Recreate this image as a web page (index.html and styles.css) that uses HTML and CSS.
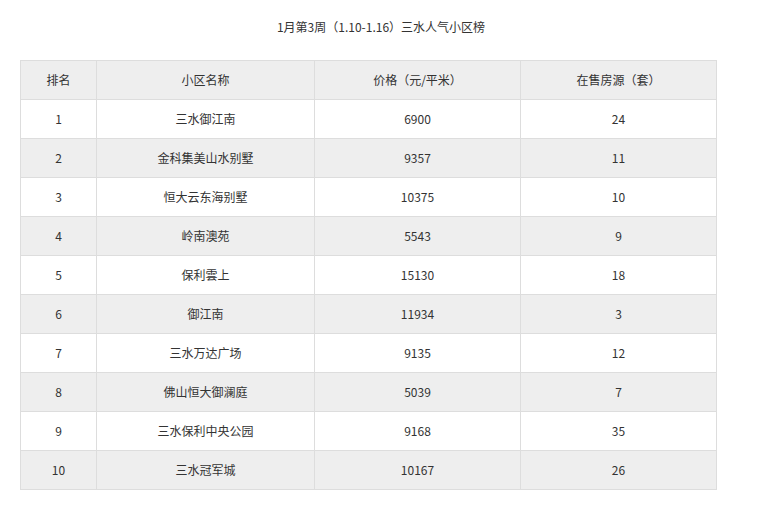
FILE: index.html
```html
<!DOCTYPE html>
<html lang="zh">
<head>
<meta charset="utf-8">
<link rel="stylesheet" href="styles.css">
</head>
<body>
<div class="page">
  <div class="title">1月第3周（1.10-1.16）三水人气小区榜</div>
  <table class="rank">
    <colgroup>
      <col class="c1"><col class="c2"><col class="c3"><col class="c4">
    </colgroup>
    <thead>
      <tr><th>排名</th><th>小区名称</th><th>价格（元/平米）</th><th>在售房源（套）</th></tr>
    </thead>
    <tbody>
      <tr><td>1</td><td>三水御江南</td><td>6900</td><td>24</td></tr>
      <tr><td>2</td><td>金科集美山水别墅</td><td>9357</td><td>11</td></tr>
      <tr><td>3</td><td>恒大云东海别墅</td><td>10375</td><td>10</td></tr>
      <tr><td>4</td><td>岭南澳苑</td><td>5543</td><td>9</td></tr>
      <tr><td>5</td><td>保利雲上</td><td>15130</td><td>18</td></tr>
      <tr><td>6</td><td>御江南</td><td>11934</td><td>3</td></tr>
      <tr><td>7</td><td>三水万达广场</td><td>9135</td><td>12</td></tr>
      <tr><td>8</td><td>佛山恒大御澜庭</td><td>5039</td><td>7</td></tr>
      <tr><td>9</td><td>三水保利中央公园</td><td>9168</td><td>35</td></tr>
      <tr><td>10</td><td>三水冠军城</td><td>10167</td><td>26</td></tr>
    </tbody>
  </table>
</div>
</body>
</html>
```
FILE: styles.css
```css
html, body {
  margin: 0;
  padding: 0;
  background: #fff;
}
body {
  font-family: "Noto Sans CJK SC", "Noto Sans", sans-serif;
  font-size: 12px;
  color: #333;
}
.page {
  padding-top: 18px;
}
.title {
  text-align: center;
  line-height: 18px;
  height: 18px;
  margin-bottom: 24px;
}
.rank {
  margin-left: 20px;
  border-collapse: collapse;
  table-layout: fixed;
  width: 696px;
}
.c1 { width: 76px; }
.c2 { width: 218px; }
.c3 { width: 206px; }
.c4 { width: 196px; }
.rank th, .rank td {
  border: 1px solid #ddd;
  height: 38px;
  padding: 0;
  text-align: center;
  vertical-align: middle;
  font-weight: normal;
  line-height: 18px;
}
.rank thead tr {
  background: #eee;
}
.rank tbody tr:nth-child(even) {
  background: #eee;
}
```
